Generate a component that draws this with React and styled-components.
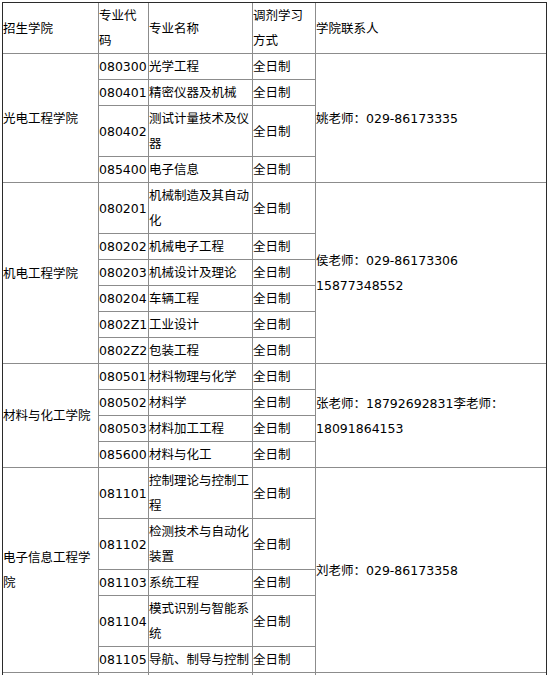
import React from "react";
import styled, { createGlobalStyle } from "styled-components";

const Global = createGlobalStyle`
  html, body { margin: 0; padding: 0; background: #fff; }
  body { font-family: "DejaVu Sans", "Noto Sans CJK SC", sans-serif; color: #000; }
`;

const Page = styled.div`
  padding: 2px 0 0 2px;
`;

const Table = styled.table`
  border-collapse: separate;
  border-spacing: 0;
  table-layout: fixed;
  width: 545px;
  border: 1px solid #2b2b2b;
  border-bottom: none;
  font-size: 12.5px;
  line-height: 25px;
`;

const Cell = styled.td`
  padding: 0;
  height: ${(p) => (p.$filler ? "25px" : "auto")};
  vertical-align: middle;
  text-align: left;
  border-bottom: 1px solid #8c8c8c;
  border-right: ${(p) => (p.$last ? "none" : "1px solid #8c8c8c")};
  white-space: ${(p) => (p.$nowrap ? "nowrap" : "normal")};
  overflow: hidden;
`;

const groups = [
  {
    school: "光电工程学院",
    contact: ["姚老师：029-86173335"],
    rows: [
      ["080300", "光学工程"],
      ["080401", "精密仪器及机械"],
      ["080402", "测试计量技术及仪器"],
      ["085400", "电子信息"],
    ],
  },
  {
    school: "机电工程学院",
    contact: ["侯老师：029-86173306", "15877348552"],
    rows: [
      ["080201", "机械制造及其自动化"],
      ["080202", "机械电子工程"],
      ["080203", "机械设计及理论"],
      ["080204", "车辆工程"],
      ["0802Z1", "工业设计"],
      ["0802Z2", "包装工程"],
    ],
  },
  {
    school: "材料与化工学院",
    contact: ["张老师：18792692831李老师：", "18091864153"],
    rows: [
      ["080501", "材料物理与化学"],
      ["080502", "材料学"],
      ["080503", "材料加工工程"],
      ["085600", "材料与化工"],
    ],
  },
  {
    school: "电子信息工程学院",
    contact: ["刘老师：029-86173358"],
    rows: [
      ["081101", "控制理论与控制工程"],
      ["081102", "检测技术与自动化装置"],
      ["081103", "系统工程"],
      ["081104", "模式识别与智能系统"],
      ["081105", "导航、制导与控制"],
    ],
  },
];

export default function App() {
  return (
    <>
      <Global />
      <Page>
        <Table>
          <colgroup>
            <col style={{ width: 96 }} />
            <col style={{ width: 50 }} />
            <col style={{ width: 104 }} />
            <col style={{ width: 63 }} />
            <col style={{ width: 230 }} />
          </colgroup>
          <tbody>
            <tr>
              <Cell>招生学院</Cell>
              <Cell>专业代码</Cell>
              <Cell>专业名称</Cell>
              <Cell>调剂学习方式</Cell>
              <Cell $last>学院联系人</Cell>
            </tr>
            {groups.map((g) =>
              g.rows.map((r, i) => (
                <tr key={r[0]}>
                  {i === 0 && <Cell rowSpan={g.rows.length}>{g.school}</Cell>}
                  <Cell $nowrap>{r[0]}</Cell>
                  <Cell>{r[1]}</Cell>
                  <Cell>全日制</Cell>
                  {i === 0 && (
                    <Cell $last rowSpan={g.rows.length}>
                      {g.contact.map((c, k) => (
                        <React.Fragment key={k}>
                          {k > 0 && <br />}
                          {c}
                        </React.Fragment>
                      ))}
                    </Cell>
                  )}
                </tr>
              ))
            )}
            <tr>
              <Cell $filler />
              <Cell $filler />
              <Cell $filler />
              <Cell $filler />
              <Cell $filler $last />
            </tr>
          </tbody>
        </Table>
      </Page>
    </>
  );
}
